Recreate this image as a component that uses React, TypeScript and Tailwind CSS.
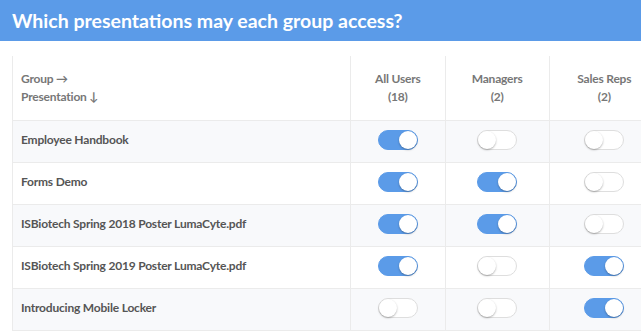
const groups = [
  { name: "All Users", count: 18 },
  { name: "Managers", count: 2 },
  { name: "Sales Reps", count: 2 },
];

const rows: { title: string; access: boolean[] }[] = [
  { title: "Employee Handbook", access: [true, false, false] },
  { title: "Forms Demo", access: [true, true, false] },
  { title: "ISBiotech Spring 2018 Poster LumaCyte.pdf", access: [true, true, false] },
  { title: "ISBiotech Spring 2019 Poster LumaCyte.pdf", access: [true, false, true] },
  { title: "Introducing Mobile Locker", access: [false, false, true] },
];

const colWidths = ["w-[95px]", "w-[104px]", "w-[110px]"];

function Toggle({ on }: { on: boolean }) {
  return (
    <span
      className={`relative inline-block h-5 w-10 rounded-full border ${
        on ? "border-[#5b9be8] bg-[#5b9be8]" : "border-[#dedede] bg-white"
      }`}
    >
      <span
        className={`absolute top-0 h-[18px] w-[18px] rounded-full bg-white shadow-[0_1px_2px_rgba(0,0,0,0.3)] ${
          on ? "right-0" : "left-0"
        }`}
      />
    </span>
  );
}

export default function App() {
  return (
    <div className="h-[332px] w-[641px] overflow-hidden bg-white font-['Lato',sans-serif]">
      <div className="flex h-[41px] items-center bg-[#5b9be8] px-3">
        <h1 className="text-[19.5px] font-bold text-white">Which presentations may each group access?</h1>
      </div>

      <div className="mt-[15px] ml-3 w-[647px] border-l border-[#ebebeb]">
        <table className="w-full border-collapse text-[12px] font-bold tracking-[-0.2px]">
          <thead>
            <tr className="h-[64px] border-b border-[#ebebeb]">
              <th className="w-[338px] pl-2 text-left font-bold leading-[18px] text-[#777]">
                <div>Group →</div>
                <div>Presentation ↓</div>
              </th>
              {groups.map((g, i) => (
                <th
                  key={g.name}
                  className={`${colWidths[i]} border-l border-[#ebebeb] text-center font-bold leading-[18px] text-[#777]`}
                >
                  <div>{g.name}</div>
                  <div>({g.count})</div>
                </th>
              ))}
            </tr>
          </thead>
          <tbody>
            {rows.map((r, ri) => (
              <tr
                key={r.title}
                className={`h-[42px] border-b border-[#ebebeb] ${ri % 2 === 0 ? "bg-[#f8f9fb]" : "bg-white"}`}
              >
                <td className="pl-2 pb-[3px] text-[#555]">{r.title}</td>
                {r.access.map((on, ci) => (
                  <td key={ci} className="border-l border-[#ebebeb] pb-[3px] text-center">
                    <span className="inline-flex align-middle">
                      <Toggle on={on} />
                    </span>
                  </td>
                ))}
              </tr>
            ))}
          </tbody>
        </table>
      </div>
    </div>
  );
}
